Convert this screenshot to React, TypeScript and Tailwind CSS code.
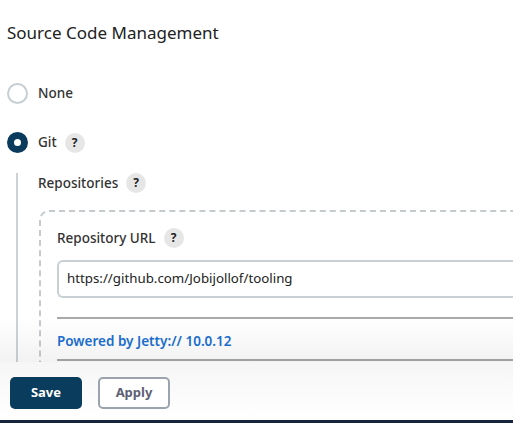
import React from 'react';

const HelpIcon = () => (
  <span className="ml-2 flex h-5 w-5 items-center justify-center rounded-full bg-[#e6e6e6] text-[12px] font-bold leading-none text-[#222]">
    ?
  </span>
);

const Radio = ({ checked }: { checked?: boolean }) =>
  checked ? (
    <span className="flex h-[21px] w-[21px] items-center justify-center rounded-full bg-[#0b3b5c]">
      <span className="h-[7px] w-[7px] rounded-full bg-white" />
    </span>
  ) : (
    <span className="h-[21px] w-[21px] rounded-full border-2 border-[#c5ced3] bg-white" />
  );

export default function App() {
  return (
    <div
      className="relative h-[423px] w-[513px] overflow-hidden bg-white text-[#333]"
      style={{ fontFamily: '"Noto Sans", "Open Sans", sans-serif' }}
    >
      <div className="pl-[7px]">
        <h2 className="pt-[21px] text-[17px] font-normal leading-[24px] text-[#222]">Source Code Management</h2>

        {/* None */}
        <div className="mt-[38px] flex h-[21px] items-center">
          <Radio />
          <span className="ml-[10px] text-[13.5px] font-medium">None</span>
        </div>

        {/* Git */}
        <div className="mt-[28px] flex h-[21px] items-center">
          <Radio checked />
          <span className="ml-[10px] text-[13.5px] font-medium">Git</span>
          <HelpIcon />
        </div>

        <div className="ml-[9px] mt-[20px] border-l-2 border-[#ccd2d6] pl-[20px]">
          <div className="flex h-5 items-center">
            <span className="text-[13.5px] font-medium">Repositories</span>
            <HelpIcon />
          </div>

          <div className="ml-px mt-[17px] w-[480px] rounded-tl-[10px] border-l-2 border-t-2 border-dashed border-[#c3cbcf] pl-4 pt-4">
            <div className="flex h-5 items-center">
              <span className="text-[13.5px] font-medium">Repository URL</span>
              <HelpIcon />
            </div>
            <div className="mt-3 flex h-[38px] items-center rounded-l-[6px] border-2 border-r-0 border-[#c8d0d4] pl-[8px] text-[13.3px] text-[#222]">
              https://github.com/Jobijollof/tooling
            </div>
            <div className="mt-[19px] border-t-2 border-[#a9a9a9] pb-[7px] pt-[9px]">
              <span className="text-[13.5px] font-semibold leading-5 text-[#1b6fd1]">Powered by Jetty:// 10.0.12</span>
            </div>
            <div className="border-t-2 border-[#a9a9a9] pb-20" />
          </div>
        </div>
      </div>

      {/* fade above the sticky bar */}
      <div className="pointer-events-none absolute bottom-[61px] left-0 right-0 h-[46px] bg-gradient-to-b from-black/0 to-black/[0.05]" />

      {/* sticky bottom bar */}
      <div className="absolute bottom-0 left-0 right-0 flex h-[61px] items-start gap-4 border-b-[3px] border-[#17243d] bg-gradient-to-b from-[#f6f6f6] to-white pl-[10px] pt-[15px]">
        <button className="h-8 w-[72px] rounded-[5px] bg-[#093c5d] text-[13px] font-bold text-white">Save</button>
        <button className="h-8 w-[72px] rounded-[5px] border-2 border-[#9ba4ad] bg-white text-[13px] font-bold text-[#5e6075]">
          Apply
        </button>
      </div>
    </div>
  );
}
